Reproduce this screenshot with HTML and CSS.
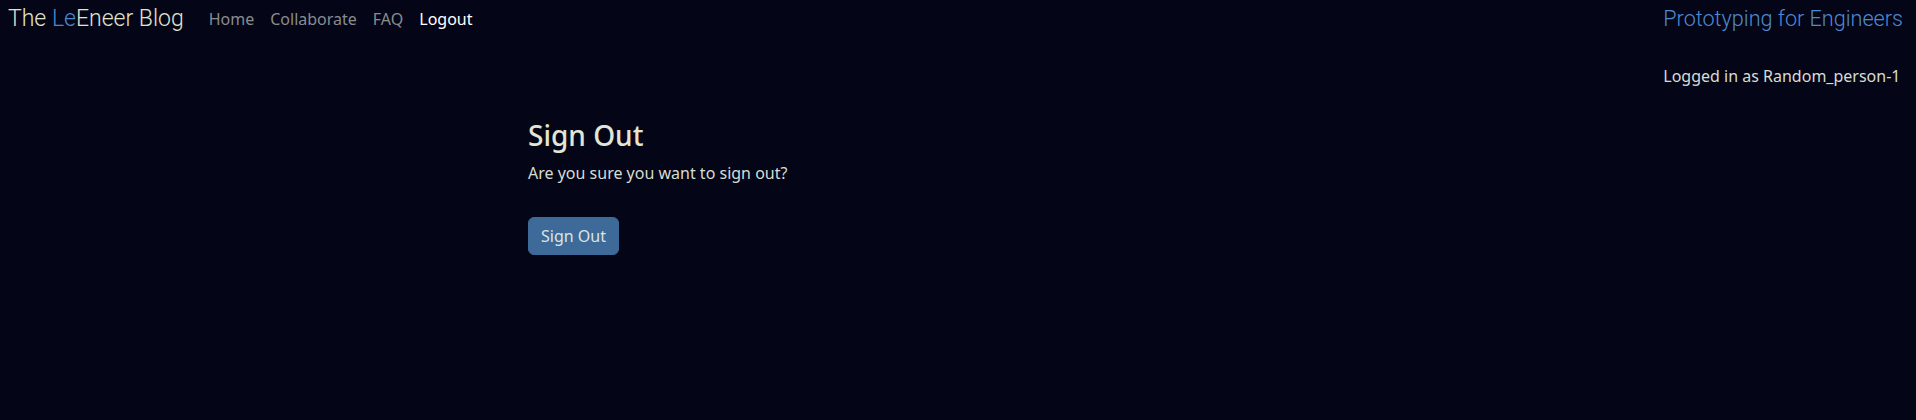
FILE: index.html
```html
<!DOCTYPE html>
<html lang="en">
<head>
<meta charset="utf-8">
<title>Sign Out - The LeEneer Blog</title>
<link rel="stylesheet" href="styles.css">
</head>
<body>
<header class="topbar">
  <div class="left">
    <a class="brand" href="#">The <span class="brand-accent">Le</span>Eneer Blog</a>
    <nav class="nav">
      <a class="nav-link" href="#">Home</a>
      <a class="nav-link" href="#">Collaborate</a>
      <a class="nav-link" href="#">FAQ</a>
      <a class="nav-link active" href="#">Logout</a>
    </nav>
  </div>
  <div class="right">
    <div class="tagline">Prototyping for Engineers</div>
    <div class="user">Logged in as Random_person-1</div>
  </div>
</header>
<main class="container">
  <h3 class="title">Sign Out</h3>
  <p class="lead">Are you sure you want to sign out?</p>
  <form class="form">
    <button class="btn" type="button">Sign Out</button>
  </form>
</main>
</body>
</html>
```
FILE: styles.css
```css
html, body {
  margin: 0;
  padding: 0;
}
body {
  background: #050518;
  color: #d6ddd2;
  font-family: "Noto Sans", "DejaVu Sans", sans-serif;
  font-size: 16px;
  line-height: 24px;
  min-height: 420px;
}
a { text-decoration: none; }

.topbar {
  display: flex;
  justify-content: space-between;
  align-items: flex-start;
  padding: 0 13px 0 8px;
}
.left {
  display: flex;
  align-items: flex-start;
}
.brand {
  font-family: Roboto, "Liberation Sans", sans-serif;
  font-size: 23px;
  font-weight: 300;
  line-height: 38px;
  color: #e0e4cc;
  margin-right: 17px;
}
.brand-accent { color: #4d88cc; }
.nav {
  display: flex;
}
.nav-link {
  font-size: 16px;
  line-height: 39px;
  padding: 0 8px;
  color: #8a8c8e;
}
.nav-link.active { color: #ffffff; }

.right {
  display: flex;
  flex-direction: column;
}
.tagline {
  font-family: Roboto, "Liberation Sans", sans-serif;
  font-size: 21.6px;
  font-weight: 300;
  line-height: 37px;
  color: #4d8ad0;
}
.user {
  margin-top: 27px;
  color: #d6ddd2;
}

.container {
  width: 860px;
  margin: 31px auto 0;
}
.title {
  font-size: 28px;
  font-weight: 500;
  line-height: 1.2;
  margin: 0 0 8px;
  color: #e2e6d4;
}
.lead {
  margin: 0;
}
.form {
  padding-top: 32px;
}
.btn {
  font-family: inherit;
  font-size: 16px;
  line-height: 24px;
  padding: 6px 12px;
  border: 1px solid #3d6a98;
  background: #3d6a98;
  color: #dde4e0;
  border-radius: 6px;
}
```
